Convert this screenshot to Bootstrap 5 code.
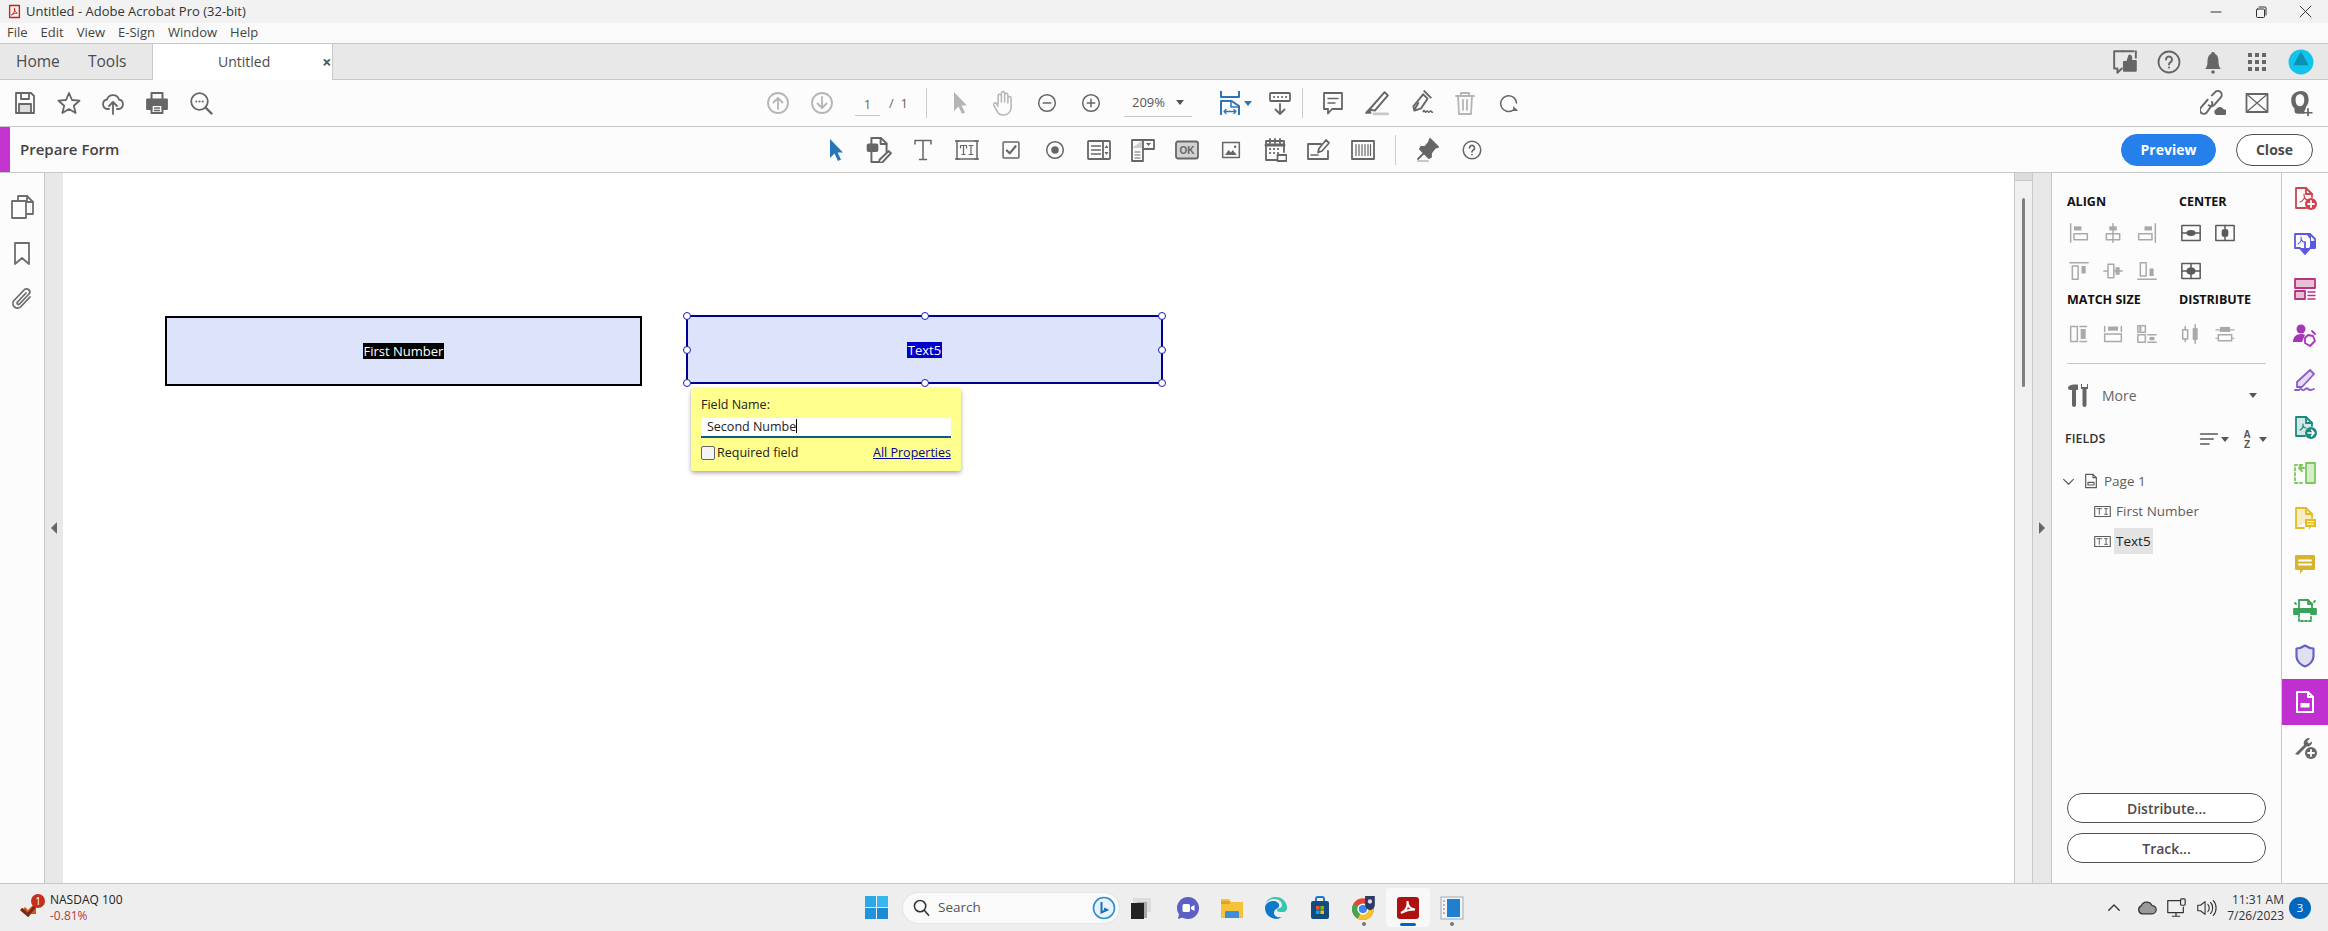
<!DOCTYPE html>
<html lang="en">
<head>
<meta charset="utf-8">
<title>Untitled - Adobe Acrobat Pro (32-bit)</title>
<link href="https://cdn.jsdelivr.net/npm/bootstrap@5.3.0/dist/css/bootstrap.min.css" rel="stylesheet">
<style>
html,body{height:100%;}
body{font-family:"Open Sans","Noto Sans",sans-serif;color:#4b4b4b;background:#fafafa;overflow:hidden;font-size:13px;}
.ic{fill:none;stroke:currentColor;stroke-width:1.8;stroke-linecap:round;stroke-linejoin:round;width:24px;height:24px;flex:none;display:block;}
.ic-20{width:20px;height:20px;}
.ic-26{width:26px;height:26px;}
.ic-30{width:30px;height:30px;}
.c-dis{color:#b5b5b5;}
.c-act{color:#666;}
.c-blue{color:#2a74b8;}
.titlebar{height:23px;background:#f2f2f2;font-size:13px;color:#333;padding-left:8px;flex:none;}
.titlebar span{margin-left:5px;}
.winbtn{width:45px;justify-content:center;color:#333;}
.menubar{height:21px;background:#fafafa;border-bottom:1px solid #c8c8c8;padding-left:7px;flex:none;font-size:13px;color:#444;gap:13px;}
.tabsbar{height:36px;background:#e8e8e8;border-bottom:1px solid #c8c8c8;flex:none;font-size:15.5px;}
.tab-home{margin-left:16px;width:72px;}
.tab-tools{width:64px;}
.tab-doc{width:181px;height:36px;background:#fff;border-left:1px solid #c8c8c8;border-right:1px solid #c8c8c8;padding-left:65px;font-size:14px;position:relative;}
.tab-x{margin-left:52px;font-size:16px;font-weight:700;color:#555;line-height:1;}
.tb-right{margin-left:auto;padding-right:5px;}
.cell{width:44px;height:100%;flex:none;display:flex;align-items:center;justify-content:center;}
.toolbar{height:47px;background:#fcfcfc;border-bottom:1px solid #c8c8c8;padding-left:3px;flex:none;}
.tbgroup{margin-left:533px;}
.pagebox{margin-left:11px;width:71px;height:100%;font-size:13px;color:#666;padding-top:2px;}
.pagenum{width:25px;text-align:center;border-bottom:1px solid #c8c8c8;height:24px;line-height:24px;}
.pageof{margin-left:9px;}
.vsep{width:1px;height:30px;background:#ccc;flex:none;}
.sep-a{margin-right:10px;}
.zoombox{width:68px;margin-left:11px;border-bottom:1px solid #c8c8c8;height:28px;padding-left:8px;font-size:13px;color:#555;justify-content:space-between;padding-right:8px;}
.caret-d{width:0;height:0;border-left:4px solid transparent;border-right:4px solid transparent;border-top:5px solid #555;flex:none;}
.fitcell{margin-left:19px;width:47px;}
.caret-blue{border-top-color:#2a74b8;margin-left:2px;}
.formbar{height:46px;background:#fcfcfc;border-bottom:1px solid #c8c8c8;flex:none;}
.accent{width:10px;height:100%;background:#c435cf;flex:none;}
.formtitle{flex:0 0 803px;padding-left:10px;font-size:15px;font-weight:600;color:#444;}
.sep-b{margin:0 10px;}
.btn.pv{width:95px;height:32px;padding:0;background:#2680eb;border-color:#2680eb;font-size:14px;font-weight:700;color:#fff;margin-right:20px;}
.btn.cl{width:77px;height:32px;padding:0;background:#fff;border:1.5px solid #505050;font-size:14px;font-weight:700;color:#4b4b4b;margin-right:15px;}
.formbtns{margin-left:auto;}
.work{min-height:0;}
.rail{width:44px;background:#fcfcfc;padding-top:11px;flex:none;color:#6e6e6e;}
.rail .cell{height:46px;}
.strip{width:19px;background:#e8e8e8;border-left:1px solid #c8c8c8;flex:none;}
.arr-l{border-top:6px solid transparent;border-bottom:6px solid transparent;border-right:6px solid #666;width:0;height:0;}
.arr-r{border-top:6px solid transparent;border-bottom:6px solid transparent;border-left:6px solid #666;width:0;height:0;}
.doc{background:#fff;position:relative;min-width:0;}
.vscroll{width:18px;background:#f0f0f0;border-left:1px solid #c8c8c8;flex:none;}
.vbtn{height:8px;background:#dcdcdc;border-bottom:1px solid #c8c8c8;}
.vthumb{width:3px;height:189px;background:#808080;margin:17px auto 0;border-radius:2px;}
.pdfield{position:absolute;background:#dde3fb;display:flex;align-items:center;justify-content:center;font-size:13px;color:#fff;line-height:16px;}
.fld-a{left:102px;top:143px;width:477px;height:70px;border:2.5px solid #000;}
.fld-a span{background:#000;padding:0 1px;}
.fld-b{left:623px;top:142px;width:477px;height:69px;border:2px solid #00008f;}
.fld-b span{background:#0000cc;padding:0 1px;}
.hdl{position:absolute;width:8px;height:8px;background:#fff;border:1.5px solid #1a1ac0;border-radius:50%;}
.h-tl{left:-5px;top:-5px}.h-tc{left:calc(50% - 4px);top:-5px}.h-tr{right:-5px;top:-5px}
.h-ml{left:-5px;top:calc(50% - 4px)}.h-mr{right:-5px;top:calc(50% - 4px)}
.h-bl{left:-5px;bottom:-5px}.h-bc{left:calc(50% - 4px);bottom:-5px}.h-br{right:-5px;bottom:-5px}
.namepop{position:absolute;left:628px;top:215px;width:270px;height:83px;background:#ffff8e;box-shadow:0 2px 4px rgba(0,0,0,.35);border-radius:3px;padding:8px 10px 0;font-size:12.5px;color:#222;}
.namelbl{height:18px;line-height:18px;}
.nameinp{height:20px;background:#fff;border-bottom:2px solid #0b5a8a;margin-top:4px;padding-left:6px;line-height:18px;color:#222;}
.nameinp i{display:inline-block;width:1px;height:14px;background:#000;vertical-align:-2px;}
.nameopts{margin-top:6px;}
.nameopts .form-check-input{width:14px;height:14px;margin:0 2px 0 0;border:1px solid #666;border-radius:2px;background-color:#f4f4f4;flex:none;}
.allprops{margin-left:auto;color:#00009c;text-decoration:underline;}
.panel{width:231px;background:#fcfcfc;border-left:1px solid #c8c8c8;border-right:1px solid #c8c8c8;flex:none;padding:17px 0 20px 10px;}
.phead{font-size:12.5px;font-weight:700;color:#111;padding-left:5px;height:24px;line-height:24px;white-space:nowrap;}
.pcol-a{width:112px;flex:none;}
.irow{height:38px;}
.irow .cell{width:34px;}
.phead-b{height:20px;line-height:20px;margin-bottom:5px;}
.c-pdis{color:#a9a9a9;}
.c-pdark{color:#5a5a5a;}
.pdiv{border-top:1px solid #c8c8c8;margin:10px 15px 0 5px;}
.morerow{height:44px;margin-top:9px;padding-left:5px;font-size:14px;color:#666;}
.morerow svg{color:#666;}
.morerow span{margin-left:11px;}
.fhead{height:28px;margin-top:8px;margin-left:3px;font-size:12.5px;font-weight:600;color:#333;}
.sorts{margin-left:auto;margin-right:14px;color:#555;}
.sorts .caret-d{margin:0 8px 0 2px;}
.tree{font-size:13.5px;color:#5c5c5c;margin-top:13px;}
.tnode{height:30px;}
.tnode-1{padding-left:0;}
.tnode-2{padding-left:32px;}
.tlabel{padding:0 2px;margin-left:3px;height:26px;line-height:26px;}
.tsel{background:#e3e3e3;color:#222;}
.pbtn{margin:auto 15px 0 5px;}
.btn.pill{height:30px;padding:0;background:#fff;border:1.2px solid #505050;font-size:14px;font-weight:600;color:#4b4b4b;width:100%;}
.pill+.pill{margin-top:10px;}
.tstrip{width:46px;background:#fcfcfc;flex:none;padding-top:2px;}
.tstrip .cell{height:45.8px;width:46px;}
.t-active{background:#c02fd0;color:#fff;}
.taskbar{height:48px;background:#eeeeee;border-top:1px solid #c8c8c8;flex:none;}
.tk-left{flex:0 0 865px;padding-left:20px;}
.tk-w{position:relative;width:24px;height:24px;}
.tk-badge{position:absolute;right:-1px;top:-2px;width:14px;height:14px;border-radius:50%;background:#c62f1e;color:#fff;font-size:10px;line-height:14px;text-align:center;}
.tk-txt{margin-left:6px;font-size:12px;line-height:16px;color:#222;}
.tk-red{color:#b43a3a;}
.searchpill{margin-left:15px;width:216px;height:30px;background:#fafafa;border-radius:15px;padding:0 3px 0 10px;font-size:13.5px;color:#555;box-shadow:0 0 2px rgba(0,0,0,.12);}
.searchpill span{margin-left:8px;}
.searchpill svg:last-child{margin-left:auto;}
.tkcell{width:44px;height:39px;flex:none;display:flex;align-items:center;justify-content:center;position:relative;}
.tkgap{margin-left:3px;}
.tk-on{background:#f8f8f8;border-radius:4px;}
.tk-u{position:absolute;bottom:1px;left:14px;width:16px;height:3px;background:#0067c0;border-radius:2px;}
.tk-d{position:absolute;bottom:1px;left:20px;width:4px;height:4px;background:#777;border-radius:50%;}
.tray{margin-left:auto;padding-right:17px;color:#333;}
.tray-a{margin-right:8px;}
.tray-b{margin-right:8px;}
.tray-c{margin-right:0;}
.clock{text-align:right;font-size:12px;line-height:16px;color:#333;margin-left:10px;margin-right:5px;}
.nbadge{width:22px;height:22px;border-radius:50%;background:#0067c0;color:#fff;font-size:11.5px;line-height:22px;text-align:center;}
.sym{display:none;}
</style>
</head>
<body class="d-flex flex-column">
<svg class="sym" xmlns="http://www.w3.org/2000/svg">
<symbol id="i-save" viewBox="0 0 24 24"><path d="M3 2h15l3 3v17H3z"/><path d="M8 2v6h8V2"/><path d="M6 22v-9h12v9" fill="currentColor" fill-opacity=".2"/></symbol>
<symbol id="i-star" viewBox="0 0 24 24"><path d="M12 2l3 7 7.5.7-5.7 5 1.8 7.3-6.6-3.9L5.400 22l1.800-7.300-5.700-5L9 9z"/></symbol>
<symbol id="i-cloud" viewBox="0 0 24 24"><path d="M8 18H6.500a4.800 4.800 0 0 1-.5-9.500 6.300 6.300 0 0 1 12 0 4.800 4.800 0 0 1-.5 9.500H16"/><path d="M12 23V11M8 15l4-4 4 4"/></symbol>
<symbol id="i-print" viewBox="0 0 24 24"><path d="M6.500 9V2h11v7" stroke-width="2"/><path d="M2 8.500h20V18h-4.500v-4h-11v4H2z" fill="currentColor"/><path d="M6.500 14h11v8h-11z" stroke-width="2"/><path d="M9.500 17h5M9.500 19.500h5" stroke-width="1.300"/></symbol>
<symbol id="i-find" viewBox="0 0 24 24"><circle cx="10.500" cy="10.500" r="8.300"/><path d="M16.500 16.500l6 6" stroke-width="2.400"/><path d="M7.300 10.500h.1M10.500 10.500h.1M13.700 10.500h.1" stroke-width="2"/></symbol>
<symbol id="i-up" viewBox="0 0 24 24"><circle cx="12" cy="12" r="10"/><path d="M12 18V7M7.500 11.500L12 7l4.500 4.500"/></symbol>
<symbol id="i-down" viewBox="0 0 24 24"><circle cx="12" cy="12" r="10"/><path d="M12 6v11M7.500 12.500L12 17l4.500-4.500"/></symbol>
<symbol id="i-cursor" viewBox="0 0 24 24"><path d="M7 1v19l4.500-4.500L15 23l3-1.500-3.400-7H20z" fill="currentColor" stroke="none"/></symbol>
<symbol id="i-hand" viewBox="0 0 24 24"><path d="M7.500 13V5.500a1.500 1.500 0 0 1 3 0V11 3a1.500 1.500 0 0 1 3 0v8-6.500a1.500 1.500 0 0 1 3 0V12 7.500a1.500 1.500 0 0 1 3 0V16c0 4-3 7-6.500 7H12c-3 0-4.500-1.500-5.500-3.500L3.500 14c-.8-1.700 1.500-3 2.600-1.500L7.500 15" stroke-width="1.400"/></symbol>
<symbol id="i-minus" viewBox="0 0 24 24"><circle cx="12" cy="12" r="10"/><path d="M7.500 12h9"/></symbol>
<symbol id="i-plus" viewBox="0 0 24 24"><circle cx="12" cy="12" r="10"/><path d="M7.500 12h9M12 7.500v9"/></symbol>
<symbol id="i-fit" viewBox="0 0 24 24"><path d="M3 0v6h18V0" stroke-width="2"/><path d="M3 24V10h10.500L21 15v9" stroke-width="2"/><path d="M13 10v6h8" stroke-width="1.500"/><path d="M6 20.500h12M8 18.500l-2 2 2 2M16 18.500l2 2-2 2" stroke-width="1.300"/></symbol>
<symbol id="i-scrollmode" viewBox="0 0 24 24"><rect x="2" y="2" width="20" height="8" rx="1"/><path d="M6 6h.1M10 6h.1M14 6h.1M18 6h.1" stroke-width="2"/><path d="M12 13v10M7.500 18.500L12 23l4.500-4.500"/></symbol>
<symbol id="i-comment" viewBox="0 0 24 24"><path d="M3 2h18v16H11l-4 4.500V18H3z"/><path d="M7 7.500h10M7 12h7" stroke-width="1.400"/></symbol>
<symbol id="i-high" viewBox="0 0 24 24"><path d="M19 2l3 3-12 14-5-1z"/><path d="M5 18l-3 3h4z" fill="currentColor"/><path d="M9 22h13" stroke-width="2.400" opacity=".35"/></symbol>
<symbol id="i-signpen" viewBox="0 0 24 24"><path d="M14 4l4 4-6 9-6 2-1-4z"/><path d="M15 1l6 6"/><path d="M9.500 12l-3.500 6"/><path d="M14 20c1.500-3 1.500 2 3 0s1.500 2 3 0 1.500 1 2.500.5" stroke-width="1.400"/></symbol>
<symbol id="i-trash" viewBox="0 0 24 24"><path d="M3 5h18M8 5V2h8v3M5 5l1 18h12l1-18M10 9v10M14 9v10"/></symbol>
<symbol id="i-undo" viewBox="0 0 24 24"><path d="M17 20.500A9.500 9.500 0 1 1 21 12"/><path d="M17 15.500v6h6z" fill="currentColor" stroke="none"/></symbol>
<symbol id="i-editdoc" viewBox="0 0 24 24"><path d="M5 7V1h9l5 5v8"/><path d="M13.500 1v5.500H19"/><rect x="1.500" y="7" width="9" height="6" rx="1" fill="currentColor"/><path d="M5 13v10h7"/><path d="M21 13l2 2-8 8.500-3 .5.500-3z"/></symbol>
<symbol id="i-t" viewBox="0 0 24 24"><path d="M4 6V2.500h16V6M12 2.500V21.500M8.500 21.500h7" stroke-width="1.500"/></symbol>
<symbol id="i-tf" viewBox="0 0 24 24"><rect x="2" y="3" width="20" height="18" stroke-width="1.500"/><path d="M0 3h4M20 3h4M0 21h4M20 21h4" stroke-width="1.500"/><path d="M5.500 10V7.500h6V10M8.500 7.500v9M7 16.500h3M14 7.500h4M16 7.500v9M14 16.500h4" stroke-width="1.200"/></symbol>
<symbol id="i-check" viewBox="0 0 24 24"><rect x="2.500" y="2.500" width="19" height="19" rx="1"/><path d="M7 12.500l3.500 3.500L17.500 7.500" stroke-width="2.600"/></symbol>
<symbol id="i-radio" viewBox="0 0 24 24"><circle cx="12" cy="12" r="10"/><circle cx="12" cy="12" r="4.500" fill="currentColor" stroke="none"/></symbol>
<symbol id="i-list" viewBox="0 0 24 24"><rect x="1" y="3" width="22" height="18" rx="1"/><path d="M4.500 8h9M4.500 12h9M4.500 16h9" stroke-width="1.400"/><path d="M16 3v18"/><path d="M17.500 10l2-3 2 3zM17.500 14l2 3 2-3z" fill="currentColor" stroke="none"/></symbol>
<symbol id="i-combo" viewBox="0 0 24 24"><path d="M1 2h22v9H12v12H1z"/><path d="M1 10h11V2" fill="currentColor" fill-opacity=".3" stroke="none"/><path d="M12 2v9"/><path d="M15 5h5l-2.500 3z" fill="currentColor" stroke="none"/><path d="M4 14h5M4 17h5M4 20h5" stroke-width="1.200"/></symbol>
<symbol id="i-ok" viewBox="0 0 24 24"><rect x="1" y="3.500" width="22" height="17" rx="2" fill="currentColor" fill-opacity=".28"/><text x="12" y="16" text-anchor="middle" font-family="Liberation Sans,sans-serif" font-size="10" font-weight="700" fill="currentColor" stroke="none">OK</text></symbol>
<symbol id="i-image" viewBox="0 0 24 24"><rect x="2" y="3" width="20" height="18"/><path d="M5 18l4-6 3 3 2-3 5 6z" fill="currentColor" stroke="none"/><circle cx="17" cy="8" r="1.500" fill="currentColor" stroke="none"/></symbol>
<symbol id="i-cal" viewBox="0 0 24 24"><path d="M14 22H3V3h18v11"/><path d="M3 7h18" stroke-width="3"/><path d="M7 1v4M12 1v4M17 1v4"/><path d="M7 11h.1M11 11h.1M15 11h.1M7 15h.1M11 15h.1M15 15h.1" stroke-width="2.200"/><rect x="14.500" y="17" width="9" height="6"/></symbol>
<symbol id="i-signf" viewBox="0 0 24 24"><path d="M14 6H1v15h20V13"/><path d="M19 2l3 3-7 8-4 1.500 1-4z"/><path d="M4 17h7" stroke-width="1.400"/></symbol>
<symbol id="i-bar" viewBox="0 0 24 24"><rect x="1" y="3" width="22" height="18"/><path d="M5 6.500v11M8 6.500v11M11 6.500v11M14 6.500v11M17 6.500v11M19.500 6.500v11" stroke-width="1.200"/></symbol>
<symbol id="i-pin" viewBox="0 0 24 24"><path d="M14 1l8 8-3 1-4 5 0 4-2 1-9-9 1-2 4 0 4-5z" fill="currentColor"/><path d="M8 15l-6 6"/><path d="M2 23h10" stroke-width="2.200" opacity=".35"/></symbol>
<symbol id="i-help" viewBox="0 0 24 24"><circle cx="12" cy="12" r="10.500"/><path d="M9 9.500a3 3 0 1 1 4.500 2.600c-1 .6-1.500 1.200-1.500 2.400M12 17.500v.1" stroke-width="2"/></symbol>
<symbol id="i-thumb" viewBox="0 0 24 24"><path d="M10 2H2v16h3v4l4-4" stroke-width="1.800"/><path d="M10 2h10" stroke-width="1.800"/><path d="M22 2v6"/><path d="M11 12h3l2-6c2 0 2 2 1.500 5H22v9H11z" fill="currentColor"/></symbol>
<symbol id="i-bell" viewBox="0 0 24 24"><path d="M12 2a2 2 0 0 1 2 2c3 1 3.500 5 3.500 8s1 6 2.500 7H4c1.500-1 2.500-4 2.500-7s.5-7 3.500-8a2 2 0 0 1 2-2z" fill="currentColor" stroke="none"/><circle cx="12" cy="22" r="1.800" fill="currentColor" stroke="none"/></symbol>
<symbol id="i-grid" viewBox="0 0 24 24"><g fill="currentColor" stroke="none"><rect x="3" y="3" width="4" height="4"/><rect x="10" y="3" width="4" height="4"/><rect x="17" y="3" width="4" height="4"/><rect x="3" y="10" width="4" height="4"/><rect x="10" y="10" width="4" height="4"/><rect x="17" y="10" width="4" height="4"/><rect x="3" y="17" width="4" height="4"/><rect x="10" y="17" width="4" height="4"/><rect x="17" y="17" width="4" height="4"/></g></symbol>
<symbol id="i-prof" viewBox="0 0 24 24"><circle cx="12" cy="12" r="11.500" fill="#12c3ec" stroke="none"/><path d="M12 2l7 13H5z" fill="#0e8fb5" stroke="none"/></symbol>
<symbol id="i-link" viewBox="0 0 24 24"><path d="M11 5l3-3a3.500 3.500 0 0 1 5 5l-6 7a3.500 3.500 0 0 1-5 0"/><path d="M11 11a3.500 3.500 0 0 1 0 3l-5 7a3.500 3.500 0 0 1-5-5l6-7"/><path d="M15 23a3 3 0 0 1 0-5.500 4 4 0 0 1 7 .5 2.500 2.500 0 0 1 1 5z" fill="currentColor" stroke="none"/></symbol>
<symbol id="i-mail" viewBox="0 0 24 24"><rect x="1.500" y="3" width="21" height="18"/><path d="M1.500 3l21 18M22.500 3l-21 18" stroke-width="1.300"/></symbol>
<symbol id="i-useradd" viewBox="0 0 24 24"><path d="M12 1c5 0 7 3.500 7 8 0 3-1 5-2.500 6.500V17a7 7 0 0 0-1.500 3v2H9c-2 0-3-1-3-3v-2C3.500 15 3 12 3 9c0-4.500 4-8 9-8z" fill="currentColor" stroke="none"/><path d="M11 4c2.500 0 4 2 4 5s-1 6-4 6-4-3-4-6 1.500-5 4-5z" fill="#fcfcfc" stroke="none"/><path d="M15 21h7M18.500 17.500v7" stroke-width="1.600"/></symbol>
<symbol id="a-l" viewBox="0 0 24 24"><path d="M2 1v22"/><rect x="6" y="4" width="9" height="5" fill="currentColor" stroke="none"/><rect x="6" y="13" width="16" height="7"/></symbol>
<symbol id="a-c" viewBox="0 0 24 24"><path d="M12 1v22"/><rect x="7.500" y="4" width="9" height="5" fill="currentColor" stroke="none"/><rect x="4" y="13" width="16" height="7"/></symbol>
<symbol id="a-r" viewBox="0 0 24 24"><path d="M22 1v22"/><rect x="9" y="4" width="9" height="5" fill="currentColor" stroke="none"/><rect x="2" y="13" width="16" height="7"/></symbol>
<symbol id="a-t" viewBox="0 0 24 24"><path d="M1 2h22"/><rect x="4" y="6" width="7" height="16"/><rect x="15" y="6" width="5" height="9" fill="currentColor" stroke="none"/></symbol>
<symbol id="a-m" viewBox="0 0 24 24"><path d="M1 12h22"/><rect x="6" y="4" width="7" height="16" fill="#fcfcfc"/><rect x="15" y="7.500" width="5" height="9" fill="currentColor" stroke="none"/></symbol>
<symbol id="a-b" viewBox="0 0 24 24"><path d="M1 22h22"/><rect x="4" y="2" width="7" height="16"/><rect x="15" y="9" width="5" height="9" fill="currentColor" stroke="none"/></symbol>
<symbol id="c-h" viewBox="0 0 24 24"><rect x="1" y="3" width="22" height="18"/><path d="M1 12h22"/><ellipse cx="12" cy="12" rx="5.500" ry="3.500" fill="currentColor" stroke="none"/></symbol>
<symbol id="c-v" viewBox="0 0 24 24"><rect x="1" y="3" width="22" height="18"/><path d="M12 3v18"/><rect x="8" y="7.500" width="8" height="9" rx="2" fill="currentColor" stroke="none"/></symbol>
<symbol id="c-b" viewBox="0 0 24 24"><rect x="1" y="3" width="22" height="18"/><path d="M12 3v18M1 12h22"/><ellipse cx="12" cy="12" rx="5.500" ry="4.500" fill="currentColor" stroke="none"/></symbol>
<symbol id="m-w" viewBox="0 0 24 24"><rect x="2" y="3" width="8" height="18"/><rect x="14" y="6" width="6" height="12" fill="currentColor" stroke="none"/><path d="M13 3h8M13 21h8"/></symbol>
<symbol id="m-h" viewBox="0 0 24 24"><path d="M2 3v6M22 3v6"/><rect x="6" y="3" width="12" height="5" fill="currentColor" stroke="none"/><rect x="2" y="12" width="20" height="9"/></symbol>
<symbol id="m-b" viewBox="0 0 24 24"><rect x="1" y="2" width="9" height="8"/><rect x="1" y="13" width="9" height="9"/><path d="M4 4v4" stroke-width="2.500"/><path d="M13 13h10M13 22h10"/><rect x="15" y="15.500" width="6" height="4" fill="currentColor" stroke="none"/></symbol>
<symbol id="d-h" viewBox="0 0 24 24"><rect x="2" y="7" width="6" height="11"/><path d="M5 3v4M5 18v3M17 1v22"/><rect x="14" y="5" width="6" height="14" fill="currentColor" stroke="none"/></symbol>
<symbol id="d-v" viewBox="0 0 24 24"><path d="M1 7h22M1 17h22" stroke-width="1.300"/><rect x="6" y="3.500" width="12" height="6" fill="currentColor" stroke="none"/><rect x="4" y="13" width="16" height="7" fill="#fcfcfc"/></symbol>
<symbol id="i-tools" viewBox="0 0 24 24"><g fill="currentColor" stroke="none"><path d="M1 5c0-2 3-3.500 7-3.500h3V7H9v15a2 2 0 0 1-4 0V7C3 7 1 7 1 5z"/><path d="M14 1v5h1.500v16a2 2 0 0 0 4 0V6H21V1l-1 0v3h-5V1z"/></g></symbol>
<symbol id="i-sort" viewBox="0 0 24 24"><path d="M2 6h20M2 12h15M2 18h10" stroke-width="2"/></symbol>
<symbol id="i-az" viewBox="0 0 24 24"><text x="12" y="11" text-anchor="middle" font-family="Liberation Sans,sans-serif" font-size="12" fill="currentColor" stroke="none">A</text><text x="12" y="23" text-anchor="middle" font-family="Liberation Sans,sans-serif" font-size="12" font-weight="700" fill="currentColor" stroke="none">Z</text></symbol>
<symbol id="i-chev" viewBox="0 0 24 24"><path d="M3 8l9 9 9-9" stroke-width="2.200"/></symbol>
<symbol id="i-page" viewBox="0 0 24 24"><path d="M4 2h11l5 5v15H4z"/><path d="M15 2v5h5"/><rect x="7.500" y="14" width="9" height="4"/></symbol>
<symbol id="i-fld" viewBox="0 0 24 24"><rect x="1" y="5" width="22" height="14" fill="none" stroke-width="1.600"/><path d="M4 8h7M7.500 8v8M15 8h4M17 8v8M15 16h4" stroke-width="1.300"/></symbol>
<symbol id="i-pages" viewBox="0 0 24 24"><path d="M8 5V1h9l6 6v12h-6"/><path d="M17 1v6h6"/><path d="M2 6h14v17H2z"/></symbol>
<symbol id="i-book" viewBox="0 0 24 24"><path d="M5 2h14v21l-7-6-7 6z"/></symbol>
<symbol id="i-clip" viewBox="0 0 24 24"><path d="M20 10l-9 9.500a4.500 4.500 0 0 1-7-6l10-10.500a3 3 0 0 1 5 4l-9.500 10a1.300 1.300 0 0 1-2-2L16 6"/></symbol>
<symbol id="t-create" viewBox="0 0 24 24"><path d="M13 22H3V2h10l6 6v3"/><path d="M13 2v6h6"/><path d="M7 16c3-1 5-4 4-8 0 4 2 6 4 6" stroke-width="1.200"/><circle cx="18" cy="18" r="6" fill="currentColor" stroke="none"/><path d="M15 18h6M18 15v6" stroke="#fff" stroke-width="1.800"/></symbol>
<symbol id="t-export" viewBox="0 0 24 24"><path d="M15 2H2v14h5"/><path d="M15 2h2l5 5v9h-5"/><path d="M14 3h4v6h5v7h-6V7z" fill="currentColor" stroke="none"/><path d="M5 12c2-1 4-3 3-7 0 3 1.500 5 3 5" stroke-width="1.100"/><path d="M12 10v11M7.500 17l4.500 5 4.500-5z" fill="currentColor"/></symbol>
<symbol id="t-org" viewBox="0 0 24 24"><rect x="2" y="2" width="20" height="9" fill="currentColor" fill-opacity=".3"/><rect x="2" y="14" width="10" height="8" fill="currentColor" fill-opacity=".3"/><path d="M15 15h7M15 18.500h7M15 22h7" stroke-width="1.400"/></symbol>
<symbol id="t-req" viewBox="0 0 24 24"><circle cx="8" cy="6" r="4.500" fill="currentColor" stroke="none"/><path d="M0 19c0-5 3-8 8-8 1.500 0 3 .4 4 1l-3 7z" fill="currentColor" stroke="none"/><path d="M15 12l5 1 2 5-5 5-5-3 0-5z" fill="#fcfcfc"/><path d="M19 8l3 3" /></symbol>
<symbol id="t-fill" viewBox="0 0 24 24"><path d="M17 1l4 4L9 18H4v-5z" fill="currentColor" fill-opacity=".2"/><path d="M2 21h4c2-3 3 1 5 0s2-3 4-1 3 1 6 0"/></symbol>
<symbol id="t-sendf" viewBox="0 0 24 24"><path d="M12 21H3V2h10l6 6v3" fill="currentColor" fill-opacity=".18"/><path d="M13 2v6h6"/><path d="M7 15c2-1 3.500-3 3-6 0 2.500 1 4 3 4" stroke-width="1.200"/><circle cx="18" cy="18" r="6" fill="currentColor" stroke="none"/><path d="M15 18h6M18.500 15l2.500 3-2.500 3" stroke="#fff" stroke-width="1.600"/></symbol>
<symbol id="t-comb" viewBox="0 0 24 24"><rect x="13" y="2" width="9" height="20" fill="currentColor" fill-opacity=".3"/><path d="M9 4H2v18h7" stroke-dasharray="2.500 2.500"/><path d="M11 7L6 7M6 7l3-3M6 7l3 3" stroke-width="2"/></symbol>
<symbol id="t-rev" viewBox="0 0 24 24"><path d="M3 22V2h10l6 6v4" fill="currentColor" fill-opacity=".25"/><path d="M3 22h8"/><path d="M13 2v6h6"/><path d="M12 13h11v8h-5l-2 3v-3h-4z" fill="currentColor" stroke="none"/><path d="M14.500 15.500h6M14.500 18h6" stroke="#fff" stroke-width="1"/></symbol>
<symbol id="t-com" viewBox="0 0 24 24"><path d="M3 3h18a1 1 0 0 1 1 1v13a1 1 0 0 1-1 1H10l-3 4v-4H3a1 1 0 0 1-1-1V4a1 1 0 0 1 1-1z" fill="currentColor" stroke="none"/><path d="M6 8.500h12M6 12.500h12" stroke="#fff" stroke-width="1.800"/></symbol>
<symbol id="t-scan" viewBox="0 0 24 24"><path d="M6 10V2h9l4 4v4"/><path d="M15 2v4h4"/><path d="M1 11h22v5h-5v-2H6v2H1z" fill="currentColor"/><path d="M6 17v6h12v-6" stroke-dasharray="2 2"/><path d="M2 5l1 1M22 3l-1 1" /></symbol>
<symbol id="t-shield" viewBox="0 0 24 24"><path d="M12 1.500c3 2 6 3 8.500 3v8c0 4.500-4 8.500-8.500 10-4.500-1.500-8.500-5.500-8.500-10v-8c2.500 0 5.500-1 8.500-3z" fill="currentColor" fill-opacity=".18" stroke-width="2.200"/></symbol>
<symbol id="t-form" viewBox="0 0 24 24"><path d="M4 2h11l5 5v15H4z" stroke-width="2"/><path d="M15 2v5h5" stroke-width="2"/><rect x="7.500" y="13" width="9" height="4.500" fill="currentColor" stroke="none"/></symbol>
<symbol id="t-wrench" viewBox="0 0 24 24"><path d="M2 19l9-9c-1-3 1-7 5-7l1 .5-3 3 2 2 3-2c.5 3-2.500 5.500-5.500 5L5 20z" fill="currentColor" stroke="none"/><circle cx="18" cy="18" r="6" fill="currentColor" stroke="none"/><path d="M15 18h6M18 15v6" stroke="#fcfcfc" stroke-width="1.800"/></symbol>
</svg>

<div class="titlebar d-flex align-items-center">
  <svg class="ic" width="13" height="16" viewBox="0 0 24 24" style="width:13px;height:17px;color:#c8221a"><path d="M3 1h18v22H3z" stroke-width="2.500"/><path d="M7 18c4-2 6-7 5-12 0 5 2 8 5 9-4 0-7 1-10 3z" stroke-width="1.800"/></svg>
  <span>Untitled - Adobe Acrobat Pro (32-bit)</span>
  <div class="ms-auto d-flex align-items-center">
    <div class="winbtn d-flex"><svg class="ic" viewBox="0 0 12 12" style="width:12px;height:12px;stroke-width:1"><path d="M1 6h10"/></svg></div>
    <div class="winbtn d-flex"><svg class="ic" viewBox="0 0 12 12" style="width:12px;height:12px;stroke-width:1"><rect x="1.500" y="3" width="8" height="8.500" rx="1"/><path d="M4 1h6a1 1 0 0 1 1 1v7"/></svg></div>
    <div class="winbtn d-flex"><svg class="ic" viewBox="0 0 12 12" style="width:13px;height:13px;stroke-width:.9"><path d="M1 1l10 10M11 1L1 11"/></svg></div>
  </div>
</div>

<div class="menubar d-flex align-items-center">
  <span>File</span><span>Edit</span><span>View</span><span>E-Sign</span><span>Window</span><span>Help</span>
</div>

<div class="tabsbar d-flex align-items-center">
  <div class="tab-home">Home</div>
  <div class="tab-tools">Tools</div>
  <div class="tab-doc d-flex align-items-center"><span>Untitled</span><span class="tab-x">×</span></div>
  <div class="tb-right d-flex h-100 c-act">
    <div class="cell"><svg class="ic ic-26"><use href="#i-thumb"/></svg></div>
    <div class="cell"><svg class="ic"><use href="#i-help"/></svg></div>
    <div class="cell"><svg class="ic"><use href="#i-bell"/></svg></div>
    <div class="cell"><svg class="ic"><use href="#i-grid"/></svg></div>
    <div class="cell"><svg class="ic ic-26"><use href="#i-prof"/></svg></div>
  </div>
</div>

<div class="toolbar d-flex align-items-center">
  <div class="d-flex h-100 c-act">
    <div class="cell"><svg class="ic"><use href="#i-save"/></svg></div>
    <div class="cell"><svg class="ic"><use href="#i-star"/></svg></div>
    <div class="cell"><svg class="ic"><use href="#i-cloud"/></svg></div>
    <div class="cell"><svg class="ic"><use href="#i-print"/></svg></div>
    <div class="cell"><svg class="ic"><use href="#i-find"/></svg></div>
  </div>
  <div class="tbgroup d-flex h-100 align-items-center">
    <div class="cell c-dis"><svg class="ic"><use href="#i-up"/></svg></div>
    <div class="cell c-dis"><svg class="ic"><use href="#i-down"/></svg></div>
    <div class="pagebox d-flex align-items-center"><div class="pagenum">1</div><div class="pageof">/&nbsp;&nbsp;1</div></div>
    <div class="vsep sep-a"></div>
    <div class="cell c-dis"><svg class="ic"><use href="#i-cursor"/></svg></div>
    <div class="cell c-dis"><svg class="ic ic-26"><use href="#i-hand"/></svg></div>
    <div class="cell c-act"><svg class="ic ic-20"><use href="#i-minus"/></svg></div>
    <div class="cell c-act"><svg class="ic ic-20"><use href="#i-plus"/></svg></div>
    <div class="zoombox d-flex align-items-center"><span>209%</span><span class="caret-d"></span></div>
    <div class="cell fitcell c-blue"><svg class="ic"><use href="#i-fit"/></svg><span class="caret-d caret-blue"></span></div>
    <div class="cell c-act"><svg class="ic"><use href="#i-scrollmode"/></svg></div>
    <div class="vsep"></div>
    <div class="cell c-act ms-2"><svg class="ic"><use href="#i-comment"/></svg></div>
    <div class="cell c-act"><svg class="ic ic-26"><use href="#i-high"/></svg></div>
    <div class="cell c-act"><svg class="ic ic-26"><use href="#i-signpen"/></svg></div>
    <div class="cell c-dis"><svg class="ic"><use href="#i-trash"/></svg></div>
    <div class="cell c-act"><svg class="ic ic-20"><use href="#i-undo"/></svg></div>
  </div>
  <div class="tb-right d-flex h-100 c-act">
    <div class="cell"><svg class="ic ic-26"><use href="#i-link"/></svg></div>
    <div class="cell"><svg class="ic"><use href="#i-mail"/></svg></div>
    <div class="cell"><svg class="ic ic-26"><use href="#i-useradd"/></svg></div>
  </div>
</div>

<div class="formbar d-flex align-items-center">
  <div class="accent"></div>
  <div class="formtitle">Prepare Form</div>
  <div class="d-flex h-100 align-items-center c-act">
    <div class="cell c-blue"><svg class="ic"><use href="#i-cursor"/></svg></div>
    <div class="cell"><svg class="ic ic-26"><use href="#i-editdoc"/></svg></div>
    <div class="cell"><svg class="ic"><use href="#i-t"/></svg></div>
    <div class="cell"><svg class="ic"><use href="#i-tf"/></svg></div>
    <div class="cell"><svg class="ic ic-20"><use href="#i-check"/></svg></div>
    <div class="cell"><svg class="ic ic-20"><use href="#i-radio"/></svg></div>
    <div class="cell"><svg class="ic"><use href="#i-list"/></svg></div>
    <div class="cell"><svg class="ic"><use href="#i-combo"/></svg></div>
    <div class="cell"><svg class="ic"><use href="#i-ok"/></svg></div>
    <div class="cell"><svg class="ic ic-20"><use href="#i-image"/></svg></div>
    <div class="cell"><svg class="ic"><use href="#i-cal"/></svg></div>
    <div class="cell"><svg class="ic"><use href="#i-signf"/></svg></div>
    <div class="cell"><svg class="ic"><use href="#i-bar"/></svg></div>
    <div class="vsep sep-b"></div>
    <div class="cell"><svg class="ic"><use href="#i-pin"/></svg></div>
    <div class="cell"><svg class="ic ic-20"><use href="#i-help"/></svg></div>
  </div>
  <div class="formbtns d-flex align-items-center">
    <button type="button" class="btn rounded-pill pv">Preview</button>
    <button type="button" class="btn rounded-pill cl">Close</button>
  </div>
</div>

<div class="work d-flex flex-grow-1">
  <div class="rail">
    <div class="cell"><svg class="ic"><use href="#i-pages"/></svg></div>
    <div class="cell"><svg class="ic"><use href="#i-book"/></svg></div>
    <div class="cell"><svg class="ic"><use href="#i-clip"/></svg></div>
  </div>
  <div class="strip d-flex align-items-center justify-content-center"><span class="arr-l"></span></div>
  <div class="doc flex-grow-1">
    <div class="pdfield fld-a"><span>First Number</span></div>
    <div class="pdfield fld-b"><span>Text5</span>
      <i class="hdl h-tl"></i><i class="hdl h-tc"></i><i class="hdl h-tr"></i><i class="hdl h-ml"></i><i class="hdl h-mr"></i><i class="hdl h-bl"></i><i class="hdl h-bc"></i><i class="hdl h-br"></i>
    </div>
    <div class="namepop">
      <div class="namelbl">Field Name:</div>
      <div class="nameinp">Second Numbe<i></i></div>
      <div class="nameopts d-flex align-items-center">
        <input class="form-check-input" type="checkbox" aria-label="Required field">
        <span>Required field</span>
        <span class="allprops">All Properties</span>
      </div>
    </div>
  </div>
  <div class="vscroll"><div class="vbtn"></div><div class="vthumb"></div></div>
  <div class="strip d-flex align-items-center justify-content-center"><span class="arr-r"></span></div>
  <div class="panel d-flex flex-column">
    <div class="d-flex">
      <div class="pcol-a">
        <div class="phead">ALIGN</div>
        <div class="irow d-flex c-pdis">
          <div class="cell"><svg class="ic ic-20"><use href="#a-l"/></svg></div>
          <div class="cell"><svg class="ic ic-20"><use href="#a-c"/></svg></div>
          <div class="cell"><svg class="ic ic-20"><use href="#a-r"/></svg></div>
        </div>
        <div class="irow d-flex c-pdis">
          <div class="cell"><svg class="ic ic-20"><use href="#a-t"/></svg></div>
          <div class="cell"><svg class="ic ic-20"><use href="#a-m"/></svg></div>
          <div class="cell"><svg class="ic ic-20"><use href="#a-b"/></svg></div>
        </div>
      </div>
      <div>
        <div class="phead">CENTER</div>
        <div class="irow d-flex c-pdark">
          <div class="cell"><svg class="ic ic-20"><use href="#c-h"/></svg></div>
          <div class="cell"><svg class="ic ic-20"><use href="#c-v"/></svg></div>
        </div>
        <div class="irow d-flex c-pdark">
          <div class="cell"><svg class="ic ic-20"><use href="#c-b"/></svg></div>
        </div>
      </div>
    </div>
    <div class="d-flex">
      <div class="pcol-a">
        <div class="phead phead-b">MATCH SIZE</div>
        <div class="irow d-flex c-pdis">
          <div class="cell"><svg class="ic ic-20"><use href="#m-w"/></svg></div>
          <div class="cell"><svg class="ic ic-20"><use href="#m-h"/></svg></div>
          <div class="cell"><svg class="ic ic-20"><use href="#m-b"/></svg></div>
        </div>
      </div>
      <div>
        <div class="phead phead-b">DISTRIBUTE</div>
        <div class="irow d-flex c-pdis">
          <div class="cell"><svg class="ic ic-20"><use href="#d-h"/></svg></div>
          <div class="cell"><svg class="ic ic-20"><use href="#d-v"/></svg></div>
        </div>
      </div>
    </div>
    <div class="pdiv"></div>
    <div class="morerow d-flex align-items-center">
      <svg class="ic"><use href="#i-tools"/></svg><span>More</span><i class="caret-d ms-auto me-4"></i>
    </div>
    <div class="fhead d-flex align-items-center">
      <span>FIELDS</span>
      <div class="sorts d-flex align-items-center">
        <svg class="ic ic-20"><use href="#i-sort"/></svg><i class="caret-d"></i>
        <svg class="ic ic-20"><use href="#i-az"/></svg><i class="caret-d me-0"></i>
      </div>
    </div>
    <div class="tree">
      <div class="tnode tnode-1 d-flex align-items-center"><svg class="ic" style="width:13px;height:13px"><use href="#i-chev"/></svg><svg class="ic ms-2" style="width:16px;height:16px"><use href="#i-page"/></svg><span class="tlabel">Page 1</span></div>
      <div class="tnode tnode-2 d-flex align-items-center"><svg class="ic" style="width:17px;height:17px"><use href="#i-fld"/></svg><span class="tlabel">First Number</span></div>
      <div class="tnode tnode-2 d-flex align-items-center"><svg class="ic" style="width:17px;height:17px"><use href="#i-fld"/></svg><span class="tlabel tsel">Text5</span></div>
    </div>
    <div class="pbtn">
      <button type="button" class="btn rounded-pill pill">Distribute...</button>
      <button type="button" class="btn rounded-pill pill">Track...</button>
    </div>
  </div>
  <div class="tstrip">
    <div class="cell" style="color:#d0424f"><svg class="ic"><use href="#t-create"/></svg></div>
    <div class="cell" style="color:#5a5ae0"><svg class="ic"><use href="#t-export"/></svg></div>
    <div class="cell" style="color:#b8347f"><svg class="ic"><use href="#t-org"/></svg></div>
    <div class="cell" style="color:#a536b8"><svg class="ic"><use href="#t-req"/></svg></div>
    <div class="cell" style="color:#8a5ac8"><svg class="ic"><use href="#t-fill"/></svg></div>
    <div class="cell" style="color:#1c8a82"><svg class="ic"><use href="#t-sendf"/></svg></div>
    <div class="cell" style="color:#7ec75a"><svg class="ic"><use href="#t-comb"/></svg></div>
    <div class="cell" style="color:#e3bd1e"><svg class="ic"><use href="#t-rev"/></svg></div>
    <div class="cell" style="color:#d8b42e"><svg class="ic"><use href="#t-com"/></svg></div>
    <div class="cell" style="color:#3aa35a"><svg class="ic"><use href="#t-scan"/></svg></div>
    <div class="cell" style="color:#6464c8"><svg class="ic"><use href="#t-shield"/></svg></div>
    <div class="cell t-active"><svg class="ic"><use href="#t-form"/></svg></div>
    <div class="cell" style="color:#666"><svg class="ic"><use href="#t-wrench"/></svg></div>
  </div>
</div>

<div class="taskbar d-flex align-items-center">
  <div class="tk-left d-flex align-items-center">
    <div class="tk-w">
      <svg viewBox="0 0 24 24" width="24" height="24"><path d="M2 14l3-3 3 3 6-6 2 2v8H7z" fill="#d4561e"/><path d="M1 13l7 6 7-9" fill="none" stroke="#7a2a14" stroke-width="3"/></svg>
      <span class="tk-badge">1</span>
    </div>
    <div class="tk-txt"><div>NASDAQ 100</div><div class="tk-red">-0.81%</div></div>
  </div>
  <svg viewBox="0 0 23 23" width="23" height="23" class="flex-none"><rect x="0" y="0" width="11" height="11" fill="#2aa8e8"/><rect x="12" y="0" width="11" height="11" fill="#38b6ee"/><rect x="0" y="12" width="11" height="11" fill="#1f94dc"/><rect x="12" y="12" width="11" height="11" fill="#1c8ad4"/></svg>
  <div class="searchpill d-flex align-items-center">
    <svg class="ic" style="width:17px;height:17px;color:#333;stroke-width:2.200" viewBox="0 0 24 24"><circle cx="10" cy="10" r="8"/><path d="M16 16l6 7"/></svg>
    <span>Search</span>
    <svg viewBox="0 0 24 24" width="24" height="24"><circle cx="12" cy="12" r="10.500" fill="#e9f3fb" stroke="#2f8fd0" stroke-width="1.600"/><path d="M9.500 6v10.500l5.500-2.500-3-1.500" fill="none" stroke="#1f6fb8" stroke-width="2"/></svg>
  </div>
  <div class="tkcell"><svg viewBox="0 0 24 24" width="24" height="24"><rect x="4" y="2" width="18" height="14" fill="#dcdcdc"/><rect x="8" y="6" width="10" height="16" fill="#a8a8a8"/><rect x="2" y="7" width="13" height="16" fill="#222"/></svg></div>
  <div class="tkcell tkgap"><svg viewBox="0 0 24 24" width="24" height="24"><circle cx="12" cy="12" r="11" fill="#5d5fc4"/><rect x="6.500" y="8" width="7.500" height="8" rx="1.500" fill="#fff"/><path d="M15 11l3.500-2v6L15 13z" fill="#fff"/><path d="M3 18l-1 5 6-2z" fill="#5d5fc4"/></svg></div>
  <div class="tkcell"><svg viewBox="0 0 24 24" width="24" height="24"><path d="M1 3h8l2 3h12v16H1z" fill="#f6c338"/><path d="M1 5h9v3H1z" fill="#e0a420"/><path d="M6 15h12a1 1 0 0 1 1 1v6H5v-6a1 1 0 0 1 1-1z" fill="#3a8fd6"/></svg></div>
  <div class="tkcell"><svg viewBox="0 0 24 24" width="24" height="24"><path d="M12 1a11 11 0 0 1 11 11c0 2-1 4-4 4s-6 0-6-2 5-1 5-5c0-3-3-6-8-6-4 0-7 2-9 5A11.500 11.500 0 0 1 12 1z" fill="#38c6b0"/><path d="M1 12c0-4 4-7 8-7 5 0 8 4 5 7-2 1-4 2-4 5s3 5 8 4a11 11 0 0 1-17-9z" fill="#0f78c8"/></svg></div>
  <div class="tkcell"><svg viewBox="0 0 24 24" width="24" height="24"><path d="M8 6V3a2 2 0 0 1 2-2h4a2 2 0 0 1 2 2v3" fill="none" stroke="#1f7ac0" stroke-width="2"/><rect x="3" y="5" width="18" height="18" rx="2" fill="#134a80"/><rect x="8" y="10" width="3.600" height="3.600" fill="#f25022"/><rect x="12.400" y="10" width="3.600" height="3.600" fill="#7fba00"/><rect x="8" y="14.400" width="3.600" height="3.600" fill="#00a4ef"/><rect x="12.400" y="14.400" width="3.600" height="3.600" fill="#ffb900"/></svg></div>
  <div class="tkcell"><svg viewBox="0 0 24 24" width="26" height="26"><circle cx="11" cy="13" r="10" fill="#e94335"/><path d="M11 13h10a10 10 0 0 1-15 8.700z" fill="#f7c12e"/><path d="M11 13L6 21.700A10 10 0 0 1 2.400 8z" fill="#3ca850"/><circle cx="11" cy="13" r="4.500" fill="#3c85f0" stroke="#fff" stroke-width="1.400"/><path d="M13 1h9v8c0 3-3 5-4.500 5S13 12 13 9z" fill="#2d3a66"/><circle cx="17.500" cy="6" r="2" fill="#ddd"/></svg><i class="tk-d"></i></div>
  <div class="tkcell tk-on"><svg viewBox="0 0 24 24" width="24" height="24"><rect x="1" y="1" width="22" height="22" rx="3" fill="#ad1212"/><path d="M5 17c5-2 7-7 6.500-12 0 5 3 8 7.500 8.500-5 0-9.500 1-14 3.500z" fill="none" stroke="#fff" stroke-width="2"/></svg><i class="tk-u"></i></div>
  <div class="tkcell"><svg viewBox="0 0 24 24" width="24" height="24"><rect x="1" y="1" width="22" height="22" fill="#f4f4f4" stroke="#9ab" stroke-width="1"/><rect x="7" y="3" width="13" height="18" fill="#1f80d0"/><path d="M3 5h2M3 9h2M3 13h2M3 17h2" stroke="#778" stroke-width="1.200"/></svg><i class="tk-d"></i></div>
  <div class="tray d-flex align-items-center">
    <svg class="ic tray-a" viewBox="0 0 24 24" style="width:14px;height:14px;stroke-width:2.400"><path d="M3 16l9-9 9 9"/></svg>
    <svg class="ic tray-b ms-2" viewBox="0 0 24 24" style="width:20px;height:20px;stroke-width:1.500"><path d="M6 19a5 5 0 0 1-1-9.500A7 7 0 0 1 18 9a5 5 0 0 1 0 10z" fill="#555" fill-opacity=".55"/></svg>
    <svg class="ic tray-b" viewBox="0 0 24 24" style="width:22px;height:22px;stroke-width:1.300"><path d="M17 4H3v13h17v-6"/><path d="M8 21h8M12 17v4"/><rect x="17" y="2" width="5" height="7" rx="1"/></svg>
    <svg class="ic tray-c" viewBox="0 0 24 24" style="width:22px;height:22px;stroke-width:1.200"><path d="M3 9v6h3l5 4V5L6 9zM14 8c2 2 2 6 0 8M17 6c3 3 3 9 0 12M20 4c4 4 4 12 0 16"/></svg>
    <div class="clock"><div>11:31 AM</div><div>7/26/2023</div></div>
    <div class="nbadge">3</div>
  </div>
</div>
<script src="https://cdn.jsdelivr.net/npm/bootstrap@5.3.0/dist/js/bootstrap.bundle.min.js"></script>
</body>
</html>
